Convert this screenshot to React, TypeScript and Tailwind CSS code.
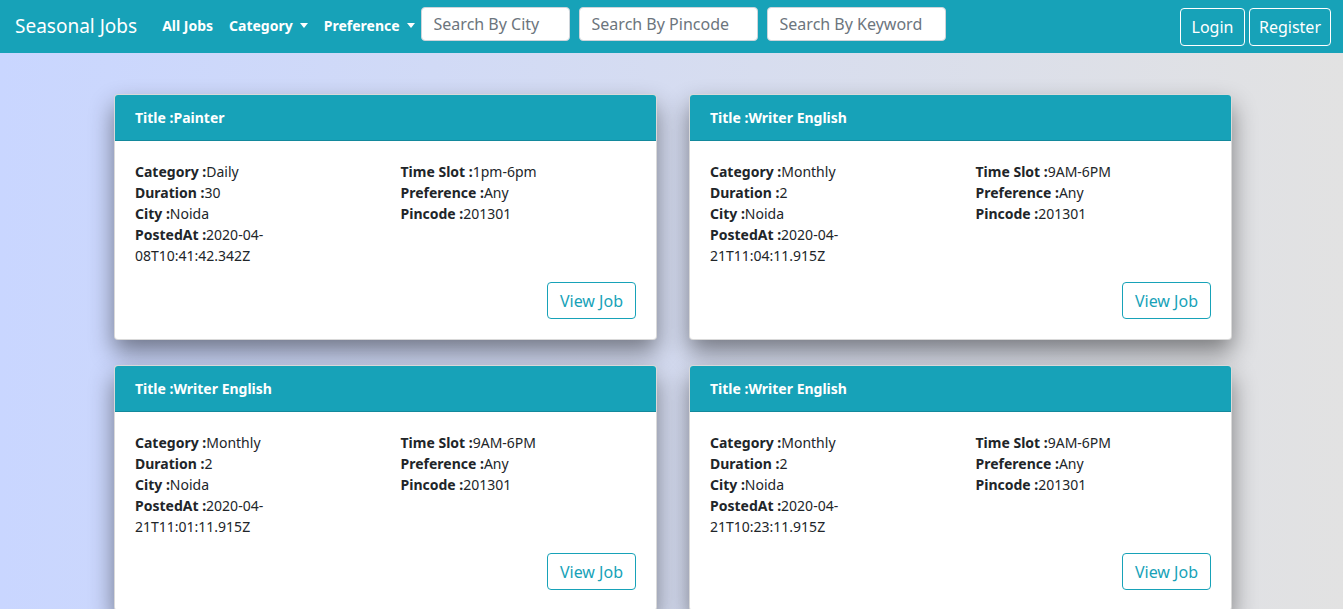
import React from "react";

type Job = {
  title: string;
  category: string;
  duration: string;
  city: string;
  postedAt: string;
  timeSlot: string;
  preference: string;
  pincode: string;
};

const jobs: Job[] = [
  {
    title: "Painter",
    category: "Daily",
    duration: "30",
    city: "Noida",
    postedAt: "2020-04-08T10:41:42.342Z",
    timeSlot: "1pm-6pm",
    preference: "Any",
    pincode: "201301",
  },
  {
    title: "Writer English",
    category: "Monthly",
    duration: "2",
    city: "Noida",
    postedAt: "2020-04-21T11:04:11.915Z",
    timeSlot: "9AM-6PM",
    preference: "Any",
    pincode: "201301",
  },
  {
    title: "Writer English",
    category: "Monthly",
    duration: "2",
    city: "Noida",
    postedAt: "2020-04-21T11:01:11.915Z",
    timeSlot: "9AM-6PM",
    preference: "Any",
    pincode: "201301",
  },
  {
    title: "Writer English",
    category: "Monthly",
    duration: "2",
    city: "Noida",
    postedAt: "2020-04-21T10:23:11.915Z",
    timeSlot: "9AM-6PM",
    preference: "Any",
    pincode: "201301",
  },
];

function Caret() {
  return (
    <span className="inline-block ml-[7px] align-middle border-t-[5px] border-x-[4.5px] border-x-transparent border-t-white" />
  );
}

function Field({ label, value }: { label: string; value: string }) {
  return (
    <div className="break-all">
      <span className="font-bold">{label} :</span>
      {value}
    </div>
  );
}

function JobCard({ job }: { job: Job }) {
  return (
    <div className="bg-white rounded-[4px] border border-black/15 shadow-[0_12px_24px_rgba(0,0,0,0.45)] overflow-hidden">
      {/* header */}
      <div className="h-[46px] bg-[#17a2b8] border-b border-black/15 px-5 flex items-center text-white font-bold text-[14px]">
        Title :{job.title}
      </div>
      <div className="px-5 pt-5 pb-5">
        <div className="grid grid-cols-2 gap-x-[30px] text-[14px] leading-[21px] text-[#212529]">
          <div>
            <Field label="Category" value={job.category} />
            <Field label="Duration" value={job.duration} />
            <Field label="City" value={job.city} />
            <div>
              <span className="font-bold">PostedAt :</span>
              {job.postedAt.slice(0, 8)}
              <br />
              {job.postedAt.slice(8)}
            </div>
          </div>
          <div>
            <Field label="Time Slot" value={job.timeSlot} />
            <Field label="Preference" value={job.preference} />
            <Field label="Pincode" value={job.pincode} />
          </div>
        </div>
        <div className="flex justify-end mt-[16px]">
          <button className="h-[37px] px-3 border border-[#17a2b8] rounded-[4px] text-[#17a2b8] text-[16px]">
            View Job
          </button>
        </div>
      </div>
    </div>
  );
}

export default function App() {
  return (
    <div className="min-h-[609px] font-['Noto_Sans','Open_Sans',sans-serif] bg-gradient-to-r from-[#c9d6ff] to-[#e2e2e2]">
      {/* top bar */}
      <nav className="h-[53px] bg-[#17a2b8] flex items-center pl-[15px] pr-3">
        <span className="text-white text-[19px] mr-[17px]">Seasonal Jobs</span>
        <div className="flex items-center text-white font-bold text-[14px] -mt-[2px]">
          <a className="px-2">All Jobs</a>
          <a className="px-2 flex items-center">
            Category
            <Caret />
          </a>
          <a className="px-2 flex items-center">
            Preference
            <Caret />
          </a>
        </div>
        <div className="flex items-center gap-[9px] -ml-[2px] -mt-[6px]">
          <input
            className="w-[149px] h-[34px] bg-white rounded-[4px] border border-[#ced4da] px-3 text-[16px] placeholder:text-[#6c757d] outline-none"
            placeholder="Search By City"
          />
          <input
            className="w-[179px] h-[34px] bg-white rounded-[4px] border border-[#ced4da] px-3 text-[16px] placeholder:text-[#6c757d] outline-none"
            placeholder="Search By Pincode"
          />
          <input
            className="w-[179px] h-[34px] bg-white rounded-[4px] border border-[#ced4da] px-3 text-[16px] placeholder:text-[#6c757d] outline-none"
            placeholder="Search By Keyword"
          />
        </div>
        <div className="ml-auto flex items-center gap-1">
          <button className="h-[38px] w-[65px] border border-white rounded-[4px] text-white text-[16px]">
            Login
          </button>
          <button className="h-[38px] w-[82px] border border-white rounded-[4px] text-white text-[16px]">
            Register
          </button>
        </div>
      </nav>

      {/* job cards */}
      <div className="pl-[114px] pt-[41px] pb-10 grid grid-cols-[543px_543px] gap-x-8 gap-y-[25px]">
        {jobs.map((job, i) => (
          <JobCard key={i} job={job} />
        ))}
      </div>
    </div>
  );
}
